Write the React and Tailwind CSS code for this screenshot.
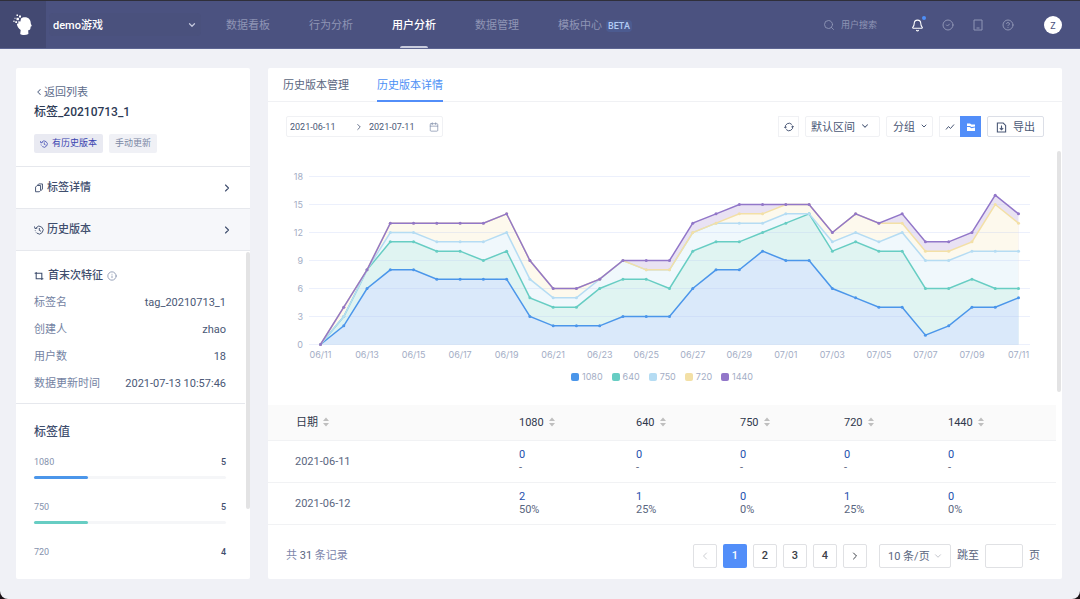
import {
  Bell,
  Calendar,
  ChevronDown,
  ChevronLeft,
  ChevronRight,
  CircleCheck,
  CircleHelp,
  Info,
  Search,
} from "lucide-react";

const navItems = [
  { label: "数据看板" },
  { label: "行为分析" },
  { label: "用户分析", active: true },
  { label: "数据管理" },
  { label: "模板中心", beta: true },
];

const tagInfo = [
  ["标签名", "tag_20210713_1"],
  ["创建人", "zhao"],
  ["用户数", "18"],
  ["数据更新时间", "2021-07-13 10:57:46"],
];

const tagValues = [
  { name: "1080", count: 5, percent: 28, color: "bg-[#4b96ea]" },
  { name: "750", count: 5, percent: 28, color: "bg-[#67cdc3]" },
  { name: "720", count: 4, percent: 22, color: "bg-[#b5dcf3]" },
];

// cumulative values, drawn from the top layer down
const series = [
  {
    name: "1440",
    line: "#9277c9",
    fill: "#e9e2f3",
    values: [0, 4, 8, 13, 13, 13, 13, 13, 14, 9, 6, 6, 7, 9, 9, 9, 13, 14, 15, 15, 15, 15, 12, 14, 13, 14, 11, 11, 12, 16, 14],
  },
  {
    name: "720",
    line: "#f3e0a6",
    fill: "#fdf9ed",
    values: [0, 4, 8, 13, 13, 13, 13, 13, 14, 9, 6, 6, 7, 9, 8, 8, 12, 13, 14, 14, 15, 15, 12, 14, 13, 13, 10, 10, 11, 15, 13],
  },
  {
    name: "750",
    line: "#b5dcf3",
    fill: "#f0f8fc",
    values: [0, 3, 8, 12, 12, 11, 11, 11, 12, 7, 5, 5, 7, 9, 8, 8, 12, 13, 13, 13, 14, 14, 11, 12, 11, 12, 9, 9, 10, 10, 10],
  },
  {
    name: "640",
    line: "#67cdc3",
    fill: "#e0f4f2",
    values: [0, 3, 8, 11, 11, 10, 10, 9, 10, 5, 4, 4, 6, 7, 7, 6, 10, 11, 11, 12, 13, 14, 10, 11, 10, 10, 6, 6, 7, 6, 6],
  },
  {
    name: "1080",
    line: "#4b96ea",
    fill: "#dae9fa",
    values: [0, 2, 6, 8, 8, 7, 7, 7, 7, 3, 2, 2, 2, 3, 3, 3, 6, 8, 8, 10, 9, 9, 6, 5, 4, 4, 1, 2, 4, 4, 5],
  },
];

const legend = [
  ["1080", "bg-[#4b96ea]"],
  ["640", "bg-[#67cdc3]"],
  ["750", "bg-[#b5dcf3]"],
  ["720", "bg-[#f3e0a6]"],
  ["1440", "bg-[#9277c9]"],
];

const dateLabels = [
  "06/11", "06/13", "06/15", "06/17", "06/19", "06/21", "06/23", "06/25",
  "06/27", "06/29", "07/01", "07/03", "07/05", "07/07", "07/09", "07/11",
];

const columns = ["日期", "1080", "640", "750", "720", "1440"];

const rows = [
  { date: "2021-06-11", cells: [["0", "-"], ["0", "-"], ["0", "-"], ["0", "-"], ["0", "-"]] },
  { date: "2021-06-12", cells: [["2", "50%"], ["1", "25%"], ["0", "0%"], ["1", "25%"], ["0", "0%"]] },
];

const Logo = () => (
  <svg className="h-[22px] w-5" viewBox="0 0 20 22" fill="#fff">
    <path d="M8 4.5C10 2.6 14.6 2.8 16.4 5.2c1.100 1.300 1.300 2.600 1.400 4.200l1 2.600-1.200.7c.1 1.900-.4 3.400-2.400 3.600l.2 3.600c-2.400 1.300-6.400 1.300-8.200 0l.5-3.900C5.500 14.600 4 12.400 3.800 9.800l1.600-.4-.2-2.200 2.200.4z" />
    <rect x="3.5" y="0.5" width="1.5" height="1.5" />
    <rect x="6" y="1.5" width="2" height="2" />
    <rect x="3.5" y="3.8" width="2.4" height="2.4" />
    <rect x="0.3" y="6.6" width="1.3" height="1.3" />
    <rect x="2.3" y="7.2" width="1.8" height="1.8" />
    <rect x="1.5" y="3.8" width="1" height="1" />
  </svg>
);

const HistoryIcon = ({ className }) => (
  <svg className={className} viewBox="0 0 16 16" fill="none" stroke="currentColor" strokeWidth="1.5">
    <path d="M3.500 4.300A6.200 6.200 0 1 1 4.500 13" />
    <path d="M.8 2.300l.8 3.500 3.600-.8M8.500 4.800v3.900l2.800 1.300M2 8.500v1M2.800 11l.6 1" />
  </svg>
);

const CopyIcon = ({ className }) => (
  <svg className={className} viewBox="0 0 16 16" fill="none" stroke="currentColor" strokeWidth="1.5">
    <path d="M5.500 3.500 7.500 1.500h6v8.500l-2.500 2" />
    <path d="M2.500 6.500 5 4h5.500v8l-2 2h-6z" />
  </svg>
);

const FeatureIcon = ({ className }) => (
  <svg className={className} viewBox="0 0 16 16" fill="none" stroke="currentColor" strokeWidth="1.7">
    <path d="M1 3.500h11.500V12M3.500 3.500v9H15" />
    <path d="M3.500 1.500v2M12.500 12.500v2" />
  </svg>
);

const RefreshIcon = ({ className }) => (
  <svg className={className} viewBox="0 0 16 16" fill="none" stroke="currentColor" strokeWidth="1.6">
    <path d="M2.200 9.500A6 6 0 0 1 12.500 4M13.800 6.500A6 6 0 0 1 3.500 12" />
    <path d="M.4 7.800l1.800 2 2-1.700M15.600 8.200l-1.800-2-2 1.700" />
  </svg>
);

const ExportIcon = ({ className }) => (
  <svg className={className} viewBox="0 0 16 16" fill="none" stroke="currentColor" strokeWidth="1.6">
    <path d="M2 1.500h8.500L14 5v9.500H2z" />
    <path d="M8 5v6M5.500 8.800 8 11.300l2.500-2.500" />
  </svg>
);

const SortIcon = () => (
  <svg className="h-2.5 w-1.5" viewBox="0 0 6 10" fill="#bfbfbf">
    <path d="M3 0.500 6 4H0zM3 9.500 6 6H0z" />
  </svg>
);

const Header = () => (
  <header className="flex h-[49px] shrink-0 items-stretch border-t border-b border-t-[#2f2f3a] border-b-[#5d6592] bg-[#4b5280]">
    <a href="#home" aria-label="首页" className="flex w-[46px] items-center justify-center bg-[#434972]">
      <Logo />
    </a>
    <div className="relative my-3 ml-[3px] w-[152px] rounded bg-[#495079]/50">
      <select aria-label="项目" className="h-full w-full appearance-none pt-0.5 pl-1 font-medium text-white">
        <option>demo游戏</option>
      </select>
      <ChevronDown className="pointer-events-none absolute top-[7px] right-1 size-2.5 text-[#c3c7dc]" strokeWidth={3} />
    </div>
    <nav className="ml-[25px] flex gap-[39px]">
      {navItems.map((item) => (
        <a
          key={item.label}
          href="#nav"
          className={`relative flex items-center gap-1 pt-0.5 whitespace-nowrap ${
            item.active ? "font-medium text-white" : "text-[#8f95b5]"
          }`}
        >
          {item.label}
          {item.beta && (
            <span className="rounded-sm bg-[#4c5b90] px-0.5 text-[9px] leading-3 font-medium text-[#b3cbf5]">BETA</span>
          )}
          {item.active && (
            <span className="absolute bottom-0 left-1/2 h-0.5 w-7 -translate-x-1/2 rounded-t bg-[#c9ccdd]" />
          )}
        </a>
      ))}
    </nav>
    <div className="ml-auto flex items-center pt-px pr-[18px] text-[#8f95b5]">
      <label className="flex items-center gap-1.5">
        <Search className="size-3" strokeWidth={1.8} />
        <input
          aria-label="用户搜索"
          placeholder="用户搜索"
          className="w-[70px] text-[9px] leading-4 outline-none placeholder:text-[#8f95b5]"
        />
      </label>
      <button aria-label="通知" className="relative text-white">
        <Bell className="size-[13px]" strokeWidth={2} />
        <span className="absolute -top-[3px] -right-0.5 size-1 rounded-full bg-[#4f8ff7]" />
      </button>
      <button aria-label="任务" className="ml-[18px]">
        <CircleCheck className="size-3" strokeWidth={2} />
      </button>
      <button aria-label="文档" className="ml-[18px]">
        <svg className="size-3" viewBox="0 0 12 12" fill="none" stroke="currentColor">
          <path d="M2 1h8v10H2zM4.500 9h3" />
        </svg>
      </button>
      <button aria-label="帮助" className="ml-[18px]">
        <CircleHelp className="size-3" strokeWidth={2} />
      </button>
      <button className="ml-[30px] size-[18px] rounded-full bg-white pt-px text-[9px] leading-4 text-[#4b5280]">Z</button>
    </div>
  </header>
);

const Sidebar = () => (
  <aside className="flex w-[234px] shrink-0 flex-col rounded-xs bg-white">
    <div className="border-b border-[#e6e8ed] px-[18px] pt-4 pb-[13px]">
      <a href="#list" className="flex h-4 items-center text-[#5c6b8a]">
        <ChevronLeft className="size-2.5" strokeWidth={2.5} />
        返回列表
      </a>
      <h1 className="text-[12px] leading-6 font-medium text-[#2d3a55]">标签_20210713_1</h1>
      <div className="mt-2.5 flex gap-1.5 text-[9px] leading-[19px]">
        <span className="flex items-center gap-1 rounded-xs bg-[#e9eaf2] px-1.5 text-[#3a44b0]">
          <HistoryIcon className="size-2" />
          有历史版本
        </span>
        <span className="rounded-xs bg-[#f0f1f6] px-1.5 text-[#7b88a5]">手动更新</span>
      </div>
    </div>
    <a href="#detail" className="flex h-[42px] items-center gap-[3px] border-b border-[#e6e8ed] px-[18px] font-medium text-[#3f4e6e]">
      <CopyIcon className="size-2.5" />
      <span className="flex-1">标签详情</span>
      <ChevronRight className="-mr-px size-3" strokeWidth={2.2} />
    </a>
    <a href="#history" className="flex h-[42px] items-center gap-[3px] border-b border-[#e6e8ed] bg-[#f6f7fa] px-[18px] font-medium text-[#3f4e6e]">
      <HistoryIcon className="size-2.5" />
      <span className="flex-1">历史版本</span>
      <ChevronRight className="-mr-px size-3" strokeWidth={2.2} />
    </a>
    <div className="relative mb-4 min-h-0 flex-1 overflow-hidden pr-[5px]">
      <section className="border-b border-[#e6e8ed] pt-[11px] pr-[19px] pb-1.5 pl-[18px]">
        <h2 className="flex h-[27px] items-center gap-1 font-medium text-[#3f4e6e]">
          <FeatureIcon className="size-2.5" />
          首末次特征
          <Info className="size-2.5 text-[#8592ad]" strokeWidth={2} />
        </h2>
        <dl>
          {tagInfo.map(([label, value]) => (
            <div key={label} className="flex h-[27px] items-center justify-between">
              <dt className="text-[#7483a3]">{label}</dt>
              <dd className="text-[#4a5876]">{value}</dd>
            </div>
          ))}
        </dl>
      </section>
      <section className="pt-[18px] pr-[19px] pl-[18px]">
        <h2 className="mb-3 text-[12px] leading-5 font-medium text-[#3f4e6e]">标签值</h2>
        {tagValues.map((item) => (
          <div key={item.name} className="h-[45px] text-[9px] leading-4">
            <div className="flex justify-between">
              <span className="text-[#8592ad]">{item.name}</span>
              <span className="font-medium text-[#3f4e6e]">{item.count}</span>
            </div>
            <div className="mt-1.5 h-[3px] rounded-full bg-[#f5f6f8]">
              <div className={`h-full rounded-full ${item.color}`} style={{ width: `${item.percent}%` }} />
            </div>
          </div>
        ))}
      </section>
      <div className="absolute top-px right-0 h-[257px] w-1 rounded-full bg-[#e3e3e4]" />
    </div>
  </aside>
);

const Toolbar = () => (
  <div className="flex items-center justify-between px-[18px] py-3.5 text-[#4a5876]">
    <div className="flex h-[21px] items-center rounded-xs border border-[#f0f1f4] px-[3px] text-[9px] leading-4">
      <input aria-label="开始日期" defaultValue="2021-06-11" className="w-[60px] outline-none" />
      <ChevronRight className="mx-1 size-2.5" strokeWidth={2} />
      <input aria-label="结束日期" defaultValue="2021-07-11" className="ml-px w-[60px] outline-none" />
      <Calendar className="size-2.5 text-[#8592ad]" strokeWidth={1.8} />
    </div>
    <div className="flex h-[21px] items-stretch gap-1.5">
      <button aria-label="刷新" className="flex w-[21px] items-center justify-center border border-[#f0f1f4]">
        <RefreshIcon className="size-2.5" />
      </button>
      <div className="relative w-[75px]">
        <select aria-label="区间" className="h-full w-full appearance-none rounded-xs border border-[#f0f1f4] pt-0.5 pl-[5px]">
          <option>默认区间</option>
        </select>
        <ChevronDown className="pointer-events-none absolute top-[5px] right-[10px] size-2.5" strokeWidth={2.5} />
      </div>
      <div className="relative w-[47px]">
        <select aria-label="分组" className="h-full w-full appearance-none rounded-xs border border-[#f0f1f4] pt-0.5 pl-1.5">
          <option>分组</option>
        </select>
        <ChevronDown className="pointer-events-none absolute top-1.5 right-[5px] size-2" strokeWidth={3} />
      </div>
      <div className="flex">
        <button aria-label="折线图" className="flex w-[21px] items-center justify-center border border-r-0 border-[#f0f1f4]">
          <svg className="size-2.5" viewBox="0 0 10 10" fill="none" stroke="currentColor">
            <path d="M1 7.500 3.500 4.500 5.500 6.500 9 2.500" />
          </svg>
        </button>
        <button aria-label="面积图" className="flex w-[21px] items-center justify-center bg-[#528ef9]">
          <svg className="size-2.5" viewBox="0 0 10 10" fill="#fff">
            <path d="M1 1.500h3l1.500 1H9v2L5.500 5 4 4H1z" />
            <path d="M1 5h2.500l2 1.200L9 5.500V9H1z" />
          </svg>
        </button>
      </div>
      <button className="flex items-center gap-1.5 rounded-xs border border-[#dcdfe7] px-2 pt-px">
        <ExportIcon className="size-[11px]" />
        导出
      </button>
    </div>
  </div>
);

const CHART_LEFT = 52.5;
const CHART_BASE = 194.5;
const STEP = 698 / 30;
const UNIT = 28 / 3;

const px = (i) => CHART_LEFT + i * STEP;
const py = (v) => CHART_BASE - v * UNIT;

const AreaChart = () => (
  <figure className="pb-[17px]">
    <svg className="block w-full font-[Inter,sans-serif] text-[9px]" viewBox="0 0 788 216" role="img" aria-label="标签值趋势">
      {series.map(({ name, fill, values }) => {
        const points = values.map((v, i) => `${px(i)},${py(v)}`).join(" ");
        return (
          <polygon key={name} points={`${points} ${px(30)},${CHART_BASE} ${CHART_LEFT},${CHART_BASE}`} fill={fill} />
        );
      })}
      {[0, 3, 6, 9, 12, 15, 18].map((v) => (
        <g key={v}>
          <line x1="41" x2="762" y1={Math.floor(py(v)) + 0.5} y2={Math.floor(py(v)) + 0.5} stroke="#b4c4f5" strokeOpacity="0.25" />
          <text x="35" y={py(v) + 3} textAnchor="end" fill="#a3adc5">
            {v}
          </text>
        </g>
      ))}
      {/* lines from the bottom layer up, so the total stays on top */}
      {[...series].reverse().map(({ name, line, values }) => (
        <g key={name}>
          <polyline points={values.map((v, i) => `${px(i)},${py(v)}`).join(" ")} fill="none" stroke={line} strokeWidth="1.5" />
          {values.map((v, i) => (
            <circle key={i} cx={px(i)} cy={py(v)} r="1.5" fill={line} />
          ))}
        </g>
      ))}
      {dateLabels.map((label, i) => (
        <text key={label} x={px(i * 2)} y="208" textAnchor="middle" fill="#a3adc5">
          {label}
        </text>
      ))}
    </svg>
    <figcaption className="flex h-[22px] items-center justify-center gap-[9px] font-[Inter,sans-serif] text-[9px] leading-4 text-[#a3adc5]">
      {legend.map(([name, color]) => (
        <span key={name} className="flex items-center gap-[3px]">
          <span className={`size-2 rounded-xs ${color}`} />
          {name}
        </span>
      ))}
    </figcaption>
  </figure>
);

const DataTable = () => (
  <table className="w-full table-fixed text-left text-[#5a6680]">
    <colgroup>
      <col className="w-[239px]" />
      <col className="w-[117px]" />
      <col className="w-[104px]" />
      <col className="w-[104px]" />
      <col className="w-[104px]" />
      <col className="w-[120px]" />
    </colgroup>
    <thead>
      <tr className="h-[35px] border-b border-[#f1f2f4] bg-[#fafafa]">
        {columns.map((name) => (
          <th key={name} className="pl-3 font-normal text-[#2f384c] first:pl-7">
            <button className="flex items-center gap-[5px]">
              {name}
              <SortIcon />
            </button>
          </th>
        ))}
      </tr>
    </thead>
    <tbody>
      {rows.map((row) => (
        <tr key={row.date} className="h-[42px] border-b border-[#f1f2f4]">
          <td className="pl-[27px]">{row.date}</td>
          {row.cells.map(([count, percent], i) => (
            <td key={i} className="pl-3 leading-[13px]">
              <a href="#users" className="block text-[#2450ae]">{count}</a>
              <span className="block">{percent}</span>
            </td>
          ))}
        </tr>
      ))}
    </tbody>
  </table>
);

const Pagination = () => (
  <div className="flex items-center justify-between pt-[19px] pr-4 pb-3 pl-[18px] text-[#5a6680]">
    <span className="text-[#7d86ab]">
      共 <span className="text-[#5a6680]">31</span> 条记录
    </span>
    <div className="flex h-6 items-stretch gap-1.5">
      <button aria-label="上一页" disabled className="flex w-6 items-center justify-center rounded-xs border border-[#e0e1e4] text-[#c4c6cb]">
        <ChevronLeft className="size-3" strokeWidth={1.8} />
      </button>
      <button className="w-6 rounded-xs bg-[#528ef9] font-medium text-white">1</button>
      {["2", "3", "4"].map((page) => (
        <button key={page} className="w-6 rounded-xs border border-[#e0e1e4] font-medium text-[#3c4048]">
          {page}
        </button>
      ))}
      <button aria-label="下一页" className="flex w-6 items-center justify-center rounded-xs border border-[#e0e1e4] text-[#3c4048]">
        <ChevronRight className="size-3" strokeWidth={2} />
      </button>
      <div className="relative ml-1.5 w-[72px]">
        <select aria-label="每页条数" className="h-full w-full appearance-none rounded-xs border border-[#e0e1e4] pt-0.5 pl-2">
          <option>10 条/页</option>
        </select>
        <ChevronDown className="pointer-events-none absolute top-[7px] right-2 size-2.5 text-[#b8bbc2]" strokeWidth={2} />
      </div>
      <label className="flex items-center gap-1.5">
        跳至
        <input className="h-6 w-[38px] rounded-xs border border-[#e0e1e4] px-1" />
        页
      </label>
    </div>
  </div>
);

const App = () => {
  return (
    <div className="bg-[#1b1216] font-[Roboto,'Noto_Sans_CJK_SC',sans-serif] text-[11px] leading-[17px]">
      <div className="flex h-screen min-h-[599px] flex-col overflow-hidden rounded-b-lg bg-[#f0f1f6]">
        <Header />
        <div className="flex min-h-0 flex-1 gap-[18px] pt-[19px] pr-[18px] pb-5 pl-4">
          <Sidebar />
          <main className="relative min-w-0 flex-1 overflow-hidden rounded-xs bg-white">
            <div role="tablist" className="flex h-[34px] gap-7 border-b border-[#f0f1f4] px-[15px]">
              <button role="tab" aria-selected="false" className="pt-0.5 text-[#5a6680]">
                历史版本管理
              </button>
              <button role="tab" aria-selected="true" className="relative pt-0.5 text-[#4b8ff5]">
                历史版本详情
                <span className="absolute -bottom-px left-0 h-0.5 w-full bg-[#528ef9]" />
              </button>
            </div>
            <Toolbar />
            <div className="-mt-px pr-1.5">
              <AreaChart />
              <DataTable />
              <Pagination />
            </div>
            <div className="absolute top-[83px] right-px h-[241px] w-1 rounded-full bg-[#e3e3e4]" />
          </main>
        </div>
      </div>
    </div>
  );
};

export default App;
